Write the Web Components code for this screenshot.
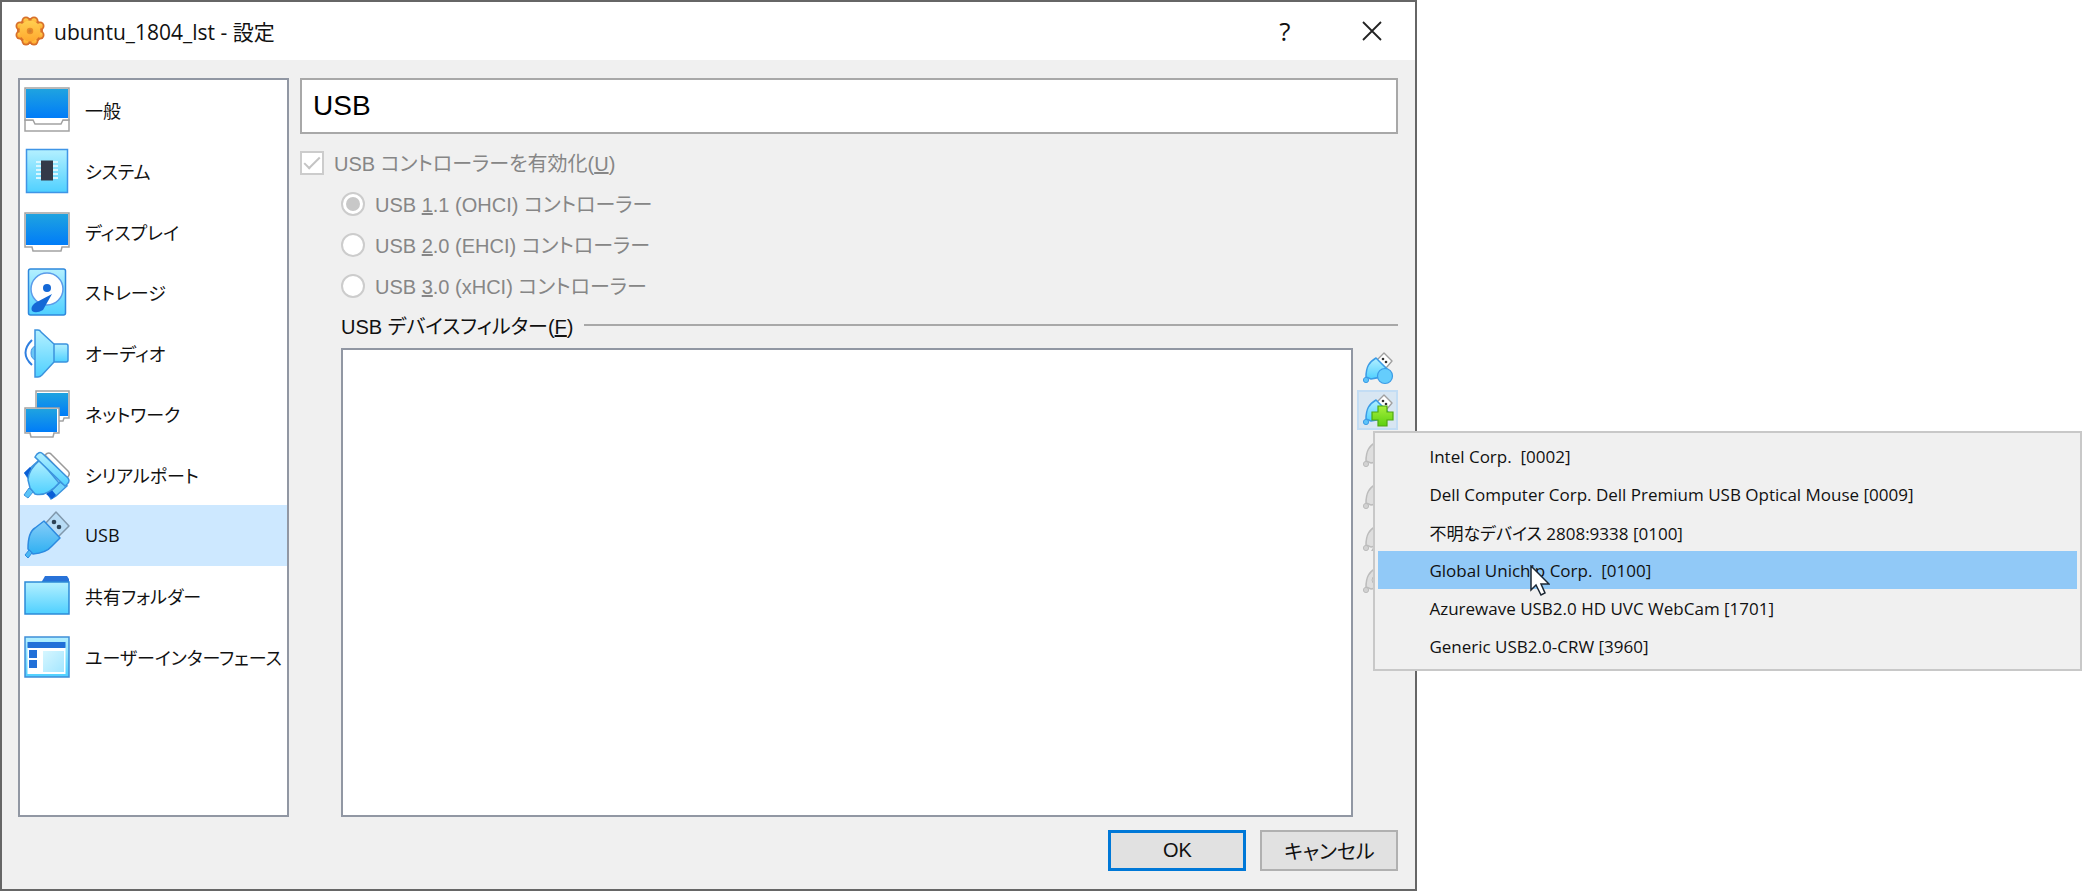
<!DOCTYPE html>
<html lang="ja">
<head>
<meta charset="utf-8">
<title>ubuntu_1804_lst - 設定</title>
<style>
    body {
        margin: 0;
        background: #fff;
        font-family: "Open Sans", "Noto Sans CJK JP", sans-serif;
        color: #111;
    }
</style>
</head>
<body>
<settings-dialog></settings-dialog>

<script>
const GRADIENTS = `
<defs>
    <linearGradient id="screen" x1="0" y1="0" x2="0" y2="1">
        <stop offset="0" stop-color="#1fa3e0"/><stop offset="1" stop-color="#007cf8"/>
    </linearGradient>
    <linearGradient id="sky" x1="0" y1="0" x2="0" y2="1">
        <stop offset="0" stop-color="#b4f0ff"/><stop offset="1" stop-color="#4fd0ff"/>
    </linearGradient>
    <linearGradient id="plug" x1="0" y1="0" x2="0" y2="1">
        <stop offset="0" stop-color="#86cdf8"/><stop offset="1" stop-color="#2fb0f2"/>
    </linearGradient>
    <linearGradient id="pale" x1="0" y1="0" x2="1" y2="1">
        <stop offset="0" stop-color="#d6f6ff"/><stop offset="1" stop-color="#a4e6ff"/>
    </linearGradient>
    <linearGradient id="gold" x1="0" y1="0" x2="0" y2="1">
        <stop offset="0" stop-color="#ffcf50"/><stop offset="1" stop-color="#ffa82e"/>
    </linearGradient>
    <linearGradient id="leaf" x1="0" y1="0" x2="0" y2="1">
        <stop offset="0" stop-color="#a6ee3c"/><stop offset="1" stop-color="#5cd010"/>
    </linearGradient>
</defs>`

const SMALL_PLUG = `
    <path d="M22 1l8 8-6 7-9-8z" fill="#fff" stroke="#a0a0a0" stroke-width="1.4" stroke-linejoin="round"/>
    <circle cx="21" cy="7" r="1.300" fill="#333"/><circle cx="24" cy="10" r="1.300" fill="#333"/>
    <path d="M14 6C7 10 4 15 4 25l5 2c9-1 14-4 17-9z" fill="url(#sky)" stroke="#3b9be6" stroke-width="1.500" stroke-linejoin="round"/>
    <circle cx="4" cy="28" r="2.600" fill="#5cc4fa" stroke="#3b9be6"/>`

const GREY_PLUG = `
    <path d="M14 6C7 10 4 15 4 25l5 2c9-1 14-4 18-10z" fill="#dedede" stroke="#bcbcbc" stroke-width="1.500"/>
    <circle cx="4" cy="28" r="2.600" fill="#d2d2d2" stroke="#bcbcbc"/>`

const ICONS = {
    general: [46, `
        <path d="M1 33h44v11H1z" fill="#fff" stroke="#a2a2a2" stroke-width="1.500"/>
        <path d="M1 1h44v32h-6l-2 4H11l-2-4H1z" fill="#fff" stroke="#a2a2a2" stroke-width="1.500"/>
        <path d="M2 2h42v29H2z" fill="url(#screen)"/>`],
    system: [46, `
        <path d="M2.500 1.500h41v43h-41z" fill="url(#sky)" stroke="#3f95e6" stroke-width="1.500"/>
        <path d="M12 14h22M12 18h22M12 22h22M12 26h22M12 30h22" stroke="#d8f6ff" stroke-width="2"/>
        <path d="M17 12.500h12v20H17z" fill="#343a48"/>`],
    display: [46, `
        <path d="M1 4h44v34h-7l-1 4H9l-1-4H1z" fill="#fff" stroke="#a2a2a2" stroke-width="1.500"/>
        <path d="M2 5h42v31H2z" fill="url(#screen)"/>`],
    storage: [46, `
        <rect x="4.500" y="0" width="37" height="46" rx="2" fill="url(#sky)" stroke="#2f88dc" stroke-width="1.500"/>
        <circle cx="23" cy="20" r="16" fill="#fff" stroke="#5b9bea" stroke-width="1.500"/>
        <circle cx="23" cy="19" r="4" fill="#1468d6"/>
        <path d="M28 25L11 34q-5 4-3 8 4 3 11-1z" fill="#1468d6"/>`],
    audio: [46, `
        <path d="M8 10Q-5 23 8 35" fill="none" stroke="#2f7fe0" stroke-width="2"/>
        <path d="M12 16q-5 1-5 7t5 7z" fill="#6cc6f4" stroke="#3f95e6"/>
        <rect x="29" y="14" width="15" height="18" rx="2" fill="url(#sky)" stroke="#3b93de" stroke-width="1.500"/>
        <path d="M11 0h3q2 0 3 2l13 12v18L18 45q-2 2-4 2h-3z" fill="url(#sky)" stroke="#3b93de" stroke-width="1.500"/>`],
    network: [46, `
        <path d="M12 0h33v27h-5l-1 3H20l-1-3h-7z" fill="#fff" stroke="#a2a2a2" stroke-width="1.500"/>
        <path d="M13 2h31v23H13z" fill="url(#screen)"/>
        <path d="M1 17h34v25h-5l-1 4H7l-1-4H1z" fill="#fff" stroke="#a2a2a2" stroke-width="1.500"/>
        <path d="M2 18h31v23H2z" fill="url(#screen)"/>`],
    serial: [46, `
        <path d="M21 3q4-4 7 0l16 16q3 3-1 7z" fill="#fff" stroke="#9a9a9a" stroke-width="1.500"/>
        <path d="M14 9L1 21l3 5 7 1L22 16zM36 30L24 42l3 5 5-3 11-10z" fill="#6ed3fc" stroke="#3b93de" stroke-width="1.500"/>
        <path d="M6 15l5 6-6 6-5-6zM27 37l5 6-4 4-6-5z" fill="#0a5fd6"/>
        <path d="M16 8q-12 10-12 20l2 8 5 6q12 3 24-11z" fill="url(#sky)" stroke="#3b93de" stroke-width="1.500"/>
        <path d="M5 36l4 4-5 6-4-3z" fill="#5bc4f8" stroke="#3b93de"/>
        <path d="M11 5q4-7 8-3l25 24q3 4-3 8z" fill="url(#sky)" stroke="#3b93de" stroke-width="1.500"/>`],
    usb: [46, `
        <path d="M32 0l13 14-11 11-13-13z" fill="#b8dcf6" stroke="#8198ac" stroke-width="1.500" stroke-linejoin="round"/>
        <path d="M20 9l16 17-8 8q-6 7-19 8l-5-5Q4 20 11 16z" fill="url(#plug)" stroke="#2c8ae0" stroke-width="1.500" stroke-linejoin="round"/>
        <path d="M5 38l3 3-4 5-3-3z" fill="#4ab8f4" stroke="#2c8ae0" stroke-linejoin="round"/>
        <circle cx="30" cy="10" r="2.300" fill="#2d4255"/><circle cx="35" cy="15" r="2.300" fill="#2d4255"/>`],
    folder: [46, `
        <path d="M17 10l4-7h22l2 3v6H17z" fill="#2872d8"/>
        <path d="M1 9h44v32H1z" fill="url(#sky)" stroke="#2c8ad8" stroke-width="1.500"/>`],
    ui: [46, `
        <path d="M1 3h44v40H1z" fill="url(#sky)" stroke="#3f8fd8" stroke-width="1.500"/>
        <path d="M3.500 13h38v27h-38z" fill="#fff"/>
        <path d="M3.500 8h38v6h-38zM5 16h8v8H5zM5 26h8v8H5z" fill="#2170d8"/>
        <path d="M19 17h21v21H19z" fill="url(#pale)"/>`],
    gear: [30, `
        <g fill="#d8702a">
            <circle cx="11" cy="5" r="4.500"/><circle cx="19" cy="5" r="4.500"/><circle cx="25" cy="10" r="4.500"/><circle cx="25" cy="19" r="4.500"/>
            <circle cx="19" cy="25" r="4.500"/><circle cx="11" cy="25" r="4.500"/><circle cx="5" cy="19" r="4.500"/><circle cx="5" cy="10" r="4.500"/>
            <circle cx="15" cy="15" r="13"/>
        </g>
        <g fill="url(#gold)">
            <circle cx="11" cy="5" r="2.700"/><circle cx="19" cy="5" r="2.700"/><circle cx="25" cy="10" r="2.700"/><circle cx="25" cy="19" r="2.700"/>
            <circle cx="19" cy="25" r="2.700"/><circle cx="11" cy="25" r="2.700"/><circle cx="5" cy="19" r="2.700"/><circle cx="5" cy="10" r="2.700"/>
            <circle cx="15" cy="15" r="10.500"/>
        </g>
        <circle cx="15" cy="15" r="2.500" fill="#d08030" stroke="#e88a28" stroke-width="1.500"/>`],
    'filter-new': [32, SMALL_PLUG + `<circle cx="23" cy="24" r="7.500" fill="#65cdfc" stroke="#3b9be6" stroke-width="1.200"/>`],
    'filter-add': [32, SMALL_PLUG + `<path d="M16 12h9v6h6v8h-6v6h-9v-6h-6v-8h6z" fill="url(#leaf)" stroke="#4ea812" stroke-width="1.200"/>`],
    'filter-edit': [32, GREY_PLUG],
    'filter-remove': [32, GREY_PLUG],
    'filter-up': [32, GREY_PLUG + `<path d="M9 31l3-5 3 5z" fill="#bcbcbc"/>`],
    'filter-down': [32, GREY_PLUG + `<circle cx="14" cy="18" r="4" fill="none" stroke="#bcbcbc"/>`],
    close: [20, `<path d="M1 1l18 18M19 1L1 19" stroke="#222" stroke-width="1.800" fill="none"/>`]
}

class AppIcon extends HTMLElement {

    constructor() {
        super()
        this.attachShadow({mode: 'open'})
    }

    connectedCallback() {
        const [box, shapes] = ICONS[this.getAttribute('name')]
        this.shadowRoot.innerHTML = `<style>
            :host { display: block; flex: none; width: ${box}px; height: ${box}px; }
            svg { display: block; width: 100%; height: 100%; overflow: visible; }
        </style>
        <svg viewBox="0 0 ${box} ${box}" aria-hidden="true">${GRADIENTS}${shapes}</svg>`
    }
}

class TitleBar extends HTMLElement {

    constructor() {
        super()
        this.attachShadow({mode: 'open'})
    }

    connectedCallback() {
        this.shadowRoot.innerHTML = `<style>
            :host {
                display: flex;
                align-items: center;
                height: 58px;
                padding-left: 13px;
                background: #fff;
            }
            h1 { flex: 1; margin: 0 0 0 9px; font-size: 21px; font-weight: 400; }
            button {
                display: grid;
                place-items: center;
                width: 87px;
                height: 100%;
                padding: 0;
                border: 0;
                background: none;
                font: 26px "Open Sans", sans-serif;
                color: #111;
            }
        </style>
        <app-icon name="gear"></app-icon>
        <h1><slot></slot></h1>
        <button aria-label="ヘルプ">?</button>
        <button aria-label="閉じる"><app-icon name="close"></app-icon></button>`
    }
}

class CategoryItem extends HTMLElement {

    constructor() {
        super()
        this.attachShadow({mode: 'open'})
    }

    connectedCallback() {
        this.shadowRoot.innerHTML = `<style>
            :host { display: block; }
            :host([selected]) { background: #cde8ff; }
            a {
                display: flex;
                align-items: center;
                gap: 15px;
                height: 100%;
                padding-left: 4px;
                color: inherit;
                text-decoration: none;
                white-space: nowrap;
            }
        </style>
        <a href="#${this.getAttribute('icon')}">
            <app-icon name="${this.getAttribute('icon')}"></app-icon>
            <span><slot></slot></span>
        </a>`
    }
}

class CategoryList extends HTMLElement {

    constructor() {
        super()
        this.attachShadow({mode: 'open'})
    }

    connectedCallback() {
        this.shadowRoot.innerHTML = `<style>
            :host {
                display: block;
                border: 2px solid #9197a3;
                background: #fff;
                font-size: 18px;
                font-feature-settings: "palt";
            }
            nav { display: grid; grid-auto-rows: 1fr; height: 607px; }
        </style>
        <nav><slot></slot></nav>`
    }
}

// tick box or radio button with its label, greyed out while the machine is running
class OptionRow extends HTMLElement {

    constructor() {
        super()
        this.attachShadow({mode: 'open'})
    }

    connectedCallback() {
        const type = this.getAttribute('type')
        const checked = this.hasAttribute('checked') ? 'checked' : ''
        this.shadowRoot.innerHTML = `<style>
            :host { display: flex; align-items: center; gap: 10px; color: #868686; }
            input {
                appearance: none;
                flex: none;
                display: grid;
                place-items: center;
                box-sizing: border-box;
                width: 24px;
                height: 24px;
                margin: 0;
                border: 2px solid #ccc;
                background: #fff;
            }
            input[type=radio] { border-radius: 50%; }
            input[type=radio]:checked::before {
                content: "";
                width: 14px;
                height: 14px;
                border-radius: 50%;
                background: #c8c8c8;
            }
            input[type=checkbox]:checked::before {
                content: "";
                width: 14px;
                height: 6px;
                border: solid #c4c4c4;
                border-width: 0 0 2px 2px;
                transform: translateY(-2px) rotate(-45deg);
            }
        </style>
        <input id="option" name="option" type="${type}" ${checked} disabled>
        <label for="option"><slot></slot></label>`
    }
}

class ToolButton extends HTMLElement {

    constructor() {
        super()
        this.attachShadow({mode: 'open'})
    }

    connectedCallback() {
        const disabled = this.hasAttribute('disabled') ? 'disabled' : ''
        this.shadowRoot.innerHTML = `<style>
            :host { display: block; }
            button {
                display: grid;
                place-items: center;
                box-sizing: border-box;
                width: 41px;
                height: 40px;
                padding: 0;
                border: 2px solid transparent;
                background: none;
            }
            :host([active]) button { border-color: #c3ddf4; background: #d8e6f2; }
        </style>
        <button aria-label="${this.getAttribute('label')}" ${disabled}>
            <app-icon name="${this.getAttribute('icon')}"></app-icon>
        </button>`
    }
}

class PushButton extends HTMLElement {

    constructor() {
        super()
        this.attachShadow({mode: 'open'})
    }

    connectedCallback() {
        this.shadowRoot.innerHTML = `<style>
            :host { display: block; }
            button {
                box-sizing: border-box;
                width: 138px;
                height: 41px;
                padding: 0;
                border: 2px solid #b0b0b0;
                background: #e1e1e1;
                font: inherit;
                color: #111;
            }
            :host([default]) button { border: 3px solid #0078d7; }
        </style>
        <button><slot></slot></button>`
    }
}

class DeviceItem extends HTMLElement {

    constructor() {
        super()
        this.attachShadow({mode: 'open'})
    }

    connectedCallback() {
        this.shadowRoot.innerHTML = `<style>
            :host { display: block; }
            button {
                display: block;
                width: 100%;
                height: 38px;
                padding: 0 0 0 51px;
                border: 0;
                background: none;
                font: inherit;
                font-feature-settings: "palt";
                color: inherit;
                text-align: left;
                white-space: pre;
            }
            :host([hover]) button { background: #91c9f7; }
        </style>
        <button role="menuitem"><slot></slot></button>`
    }
}

class DeviceMenu extends HTMLElement {

    constructor() {
        super()
        this.attachShadow({mode: 'open'})
    }

    connectedCallback() {
        this.shadowRoot.innerHTML = `<style>
            :host {
                position: absolute;
                top: 41px;
                left: 16px;
                box-sizing: border-box;
                width: 34vw;
                padding: 4px 3px;
                border: 2px solid #c8c8c8;
                background: #f0f0f0;
                font: 17px "Open Sans", "Noto Sans CJK JP", sans-serif;
            }
            /* mouse pointer over the highlighted device */
            svg { position: absolute; top: 132px; left: 155px; width: 20px; height: 31px; }
        </style>
        <div role="menu"><slot></slot></div>
        <svg viewBox="0 0 20 31" aria-hidden="true">
            <path d="M1 1v24l5-5 5 10 4-2-4-9h8z" fill="#fff" stroke="#1c2733" stroke-width="1.500"/>
        </svg>`
    }
}

class UsbPage extends HTMLElement {

    constructor() {
        super()
        this.attachShadow({mode: 'open'})
    }

    connectedCallback() {
        this.shadowRoot.innerHTML = `<style>
            :host {
                display: flex;
                flex-direction: column;
                font: 20px "Liberation Sans", "Noto Sans CJK JP", sans-serif;
                font-feature-settings: "palt";
            }
            h2 {
                margin: 0;
                padding: 0 11px;
                border: 2px solid #a8a8a8;
                background: #fff;
                font-size: 28px;
                font-weight: 400;
                line-height: 52px;
                color: #000;
            }
            option-row { height: 41px; }
            .enable { margin-top: 8px; }
            .details { flex: 1; display: flex; flex-direction: column; padding-left: 41px; }
            .legend { display: flex; align-items: center; gap: 11px; height: 38px; }
            .legend::after { content: ""; flex: 1; border-top: 2px solid #a8a8a8; }
            .filters { flex: 1; display: flex; gap: 4px; margin-top: 4px; }
            .list { flex: 1; border: 2px solid #9197a3; background: #fff; }
            .tools { display: flex; flex-direction: column; gap: 2px; width: 41px; }
            .anchor { position: relative; }
        </style>
        <h2>USB</h2>
        <option-row class="enable" type="checkbox" checked>USB コントローラーを有効化(<u>U</u>)</option-row>
        <div class="details">
            <option-row type="radio" checked>USB <u>1</u>.1 (OHCI) コントローラー</option-row>
            <option-row type="radio">USB <u>2</u>.0 (EHCI) コントローラー</option-row>
            <option-row type="radio">USB <u>3</u>.0 (xHCI) コントローラー</option-row>
            <div class="legend"><span>USB デバイスフィルター(<u>F</u>)</span></div>
            <div class="filters">
                <div class="list"></div>
                <div class="tools">
                    <tool-button icon="filter-new" label="新規フィルター"></tool-button>
                    <div class="anchor">
                        <tool-button icon="filter-add" label="デバイスからフィルターを追加" active></tool-button>
                        <device-menu>
                            <device-item>Intel Corp.  [0002]</device-item>
                            <device-item>Dell Computer Corp. Dell Premium USB Optical Mouse [0009]</device-item>
                            <device-item>不明なデバイス 2808:9338 [0100]</device-item>
                            <device-item hover>Global Unichip Corp.  [0100]</device-item>
                            <device-item>Azurewave USB2.0 HD UVC WebCam [1701]</device-item>
                            <device-item>Generic USB2.0-CRW [3960]</device-item>
                        </device-menu>
                    </div>
                    <tool-button icon="filter-edit" label="フィルターを編集" disabled></tool-button>
                    <tool-button icon="filter-remove" label="フィルターを削除" disabled></tool-button>
                    <tool-button icon="filter-up" label="上へ" disabled></tool-button>
                    <tool-button icon="filter-down" label="下へ" disabled></tool-button>
                </div>
            </div>
        </div>`
    }
}

class SettingsDialog extends HTMLElement {

    constructor() {
        super()
        this.attachShadow({mode: 'open'})
    }

    connectedCallback() {
        this.shadowRoot.innerHTML = `<style>
            :host {
                display: flex;
                flex-direction: column;
                box-sizing: border-box;
                width: calc(68vw + 1px);
                min-height: 100vh;
                border: 2px solid #666;
                background: #f0f0f0;
            }
            main {
                flex: 1;
                display: grid;
                grid-template-columns: 271px 1fr;
                gap: 11px;
                padding: 18px 17px 0 16px;
            }
            footer {
                display: flex;
                justify-content: flex-end;
                gap: 14px;
                padding: 13px 17px 18px;
                font: 20px "Liberation Sans", "Noto Sans CJK JP", sans-serif;
                font-feature-settings: "palt";
            }
        </style>
        <title-bar>ubuntu_1804_lst - 設定</title-bar>
        <main>
            <category-list>
                <category-item icon="general">一般</category-item>
                <category-item icon="system">システム</category-item>
                <category-item icon="display">ディスプレイ</category-item>
                <category-item icon="storage">ストレージ</category-item>
                <category-item icon="audio">オーディオ</category-item>
                <category-item icon="network">ネットワーク</category-item>
                <category-item icon="serial">シリアルポート</category-item>
                <category-item icon="usb" selected>USB</category-item>
                <category-item icon="folder">共有フォルダー</category-item>
                <category-item icon="ui">ユーザーインターフェース</category-item>
            </category-list>
            <usb-page></usb-page>
        </main>
        <footer>
            <push-button default>OK</push-button>
            <push-button>キャンセル</push-button>
        </footer>`
    }
}

customElements.define('app-icon', AppIcon)
customElements.define('title-bar', TitleBar)
customElements.define('category-item', CategoryItem)
customElements.define('category-list', CategoryList)
customElements.define('option-row', OptionRow)
customElements.define('tool-button', ToolButton)
customElements.define('push-button', PushButton)
customElements.define('device-item', DeviceItem)
customElements.define('device-menu', DeviceMenu)
customElements.define('usb-page', UsbPage)
customElements.define('settings-dialog', SettingsDialog)
</script>
</body>
</html>
